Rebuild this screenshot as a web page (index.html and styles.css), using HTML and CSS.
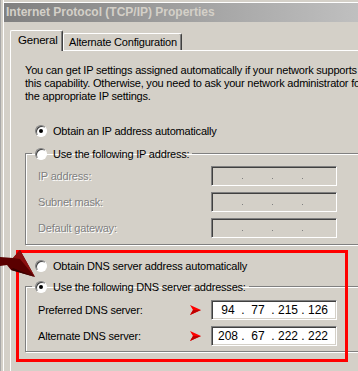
FILE: index.html
```html
<!DOCTYPE html>
<html>
<head>
    <title>Internet Protocol (TCP/IP) Properties</title>
    <link rel="stylesheet" href="styles.css">
</head>
<body>
<div class="desk">
    <div class="strip"></div>
    <div class="dialog">
        <div class="titlebar">Internet Protocol (TCP/IP) Properties</div>

        <div class="tabs">
            <div class="tab active">General</div>
            <div class="tab">Alternate Configuration</div>
        </div>

        <div class="panel">
            <p class="intro">You can get IP settings assigned automatically if your network supports<br>
                this capability. Otherwise, you need to ask your network administrator for<br>
                the appropriate IP settings.</p>

            <div class="option first">
                <span class="radio checked"></span>
                <span>Obtain an IP address automatically</span>
            </div>

            <fieldset class="group ip-group">
                <legend>
                    <span class="radio"></span>
                    <span>Use the following IP address:</span>
                </legend>
                <div class="field">
                    <span class="label disabled">IP address:</span>
                    <div class="ipbox off">
                        <span class="seg"></span><span class="dot">.</span>
                        <span class="seg"></span><span class="dot">.</span>
                        <span class="seg"></span><span class="dot">.</span>
                        <span class="seg"></span>
                    </div>
                </div>
                <div class="field">
                    <span class="label disabled">Subnet mask:</span>
                    <div class="ipbox off">
                        <span class="seg"></span><span class="dot">.</span>
                        <span class="seg"></span><span class="dot">.</span>
                        <span class="seg"></span><span class="dot">.</span>
                        <span class="seg"></span>
                    </div>
                </div>
                <div class="field">
                    <span class="label disabled">Default gateway:</span>
                    <div class="ipbox off">
                        <span class="seg"></span><span class="dot">.</span>
                        <span class="seg"></span><span class="dot">.</span>
                        <span class="seg"></span><span class="dot">.</span>
                        <span class="seg"></span>
                    </div>
                </div>
            </fieldset>

            <div class="option dns-auto">
                <span class="radio"></span>
                <span>Obtain DNS server address automatically</span>
            </div>

            <fieldset class="group dns-group">
                <legend>
                    <span class="radio checked"></span>
                    <span>Use the following DNS server addresses:</span>
                </legend>
                <div class="field">
                    <span class="label">Preferred DNS server:</span>
                    <svg class="pointer" width="11" height="10" viewBox="0 0 11 10">
                        <polygon points="0,0 11,5 0,10 3,5" fill="#ff0000"/>
                        <polygon points="0,10 11,5 3,5" fill="#c00000"/>
                    </svg>
                    <div class="ipbox">
                        <span class="seg">94</span><span class="dot">.</span>
                        <span class="seg">77</span><span class="dot">.</span>
                        <span class="seg">215</span><span class="dot">.</span>
                        <span class="seg">126</span>
                    </div>
                </div>
                <div class="field">
                    <span class="label">Alternate DNS server:</span>
                    <svg class="pointer" width="11" height="10" viewBox="0 0 11 10">
                        <polygon points="0,0 11,5 0,10 3,5" fill="#ff0000"/>
                        <polygon points="0,10 11,5 3,5" fill="#c00000"/>
                    </svg>
                    <div class="ipbox">
                        <span class="seg">208</span><span class="dot">.</span>
                        <span class="seg">67</span><span class="dot">.</span>
                        <span class="seg">222</span><span class="dot">.</span>
                        <span class="seg">222</span>
                    </div>
                </div>
            </fieldset>
        </div>
    </div>
</div>

<!-- annotations drawn over the screenshot -->
<div class="highlight"></div>
<svg class="big-arrow" width="40" height="45" viewBox="0 240 40 45">
    <polygon points="0,257 13,258 20,250 35,277 11,270 7,265 0,266" fill="#5a0000"/>
    <polygon points="13,258 20,250 35,277 20,259" fill="#8a1010"/>
    <polygon points="35,277 11,270 13,268" fill="#3a0000"/>
</svg>
</body>
</html>
```

FILE: styles.css
```css
body {
    margin: 0;
    width: 358px;
    height: 371px;
    overflow: hidden;
    position: relative;
    background-color: #d4d0c8;
    font-family: "Liberation Sans", Arial, sans-serif;
    font-size: 11px;
    letter-spacing: -0.2px;
    color: #000;
}

.desk {
    display: flex;
    height: 371px;
}

.strip {
    flex: none;
    width: 4px;
    box-sizing: border-box;
    background-color: #d4d0c8;
    border-left: 1px solid #a8a8a8;
    border-right: 1px solid #fff;
}

.dialog {
    width: 420px;
    flex: none;
    padding-top: 2px;
}

.titlebar {
    border-top: 1px solid #fff;
    height: 19px;
    line-height: 19px;
    padding-left: 2px;
    font-weight: bold;
    font-size: 12px;
    letter-spacing: 0;
    color: #d4d0c8;
    background: linear-gradient(to right, #808080, #c0c0c0 85%);
    white-space: nowrap;
}

.tabs {
    display: flex;
    align-items: flex-end;
    height: 20px;
    margin-top: 8px;
    padding-left: 6px;
}

.tab {
    height: 17px;
    line-height: 16px;
    padding: 0 4px 0 5px;
    border-top: 1px solid #fff;
    border-left: 1px solid #fff;
    border-right: 1px solid #404040;
    box-shadow: inset -1px 0 #808080;
    border-radius: 2px 2px 0 0;
    box-sizing: border-box;
    white-space: nowrap;
}

.tab.active {
    height: 21px;
    width: 53px;
    padding-left: 7px;
    line-height: 19px;
    margin-bottom: -1px;
    position: relative;
    background-color: #d4d0c8;
    font-size: 11.5px;
}

.panel {
    margin-left: 6px;
    border-top: 1px solid #fff;
    border-left: 1px solid #fff;
    height: 330px;
}

.intro {
    margin: 13px 0 0 14px;
    line-height: 13px;
    white-space: nowrap;
}

.option {
    display: flex;
    align-items: center;
    gap: 6px;
    height: 13px;
    padding-left: 24px;
    white-space: nowrap;
}

.option.first {
    margin-top: 21px;
}

.option.dns-auto {
    margin-top: 14px;
}

.radio {
    width: 12px;
    height: 12px;
    flex: none;
    box-sizing: border-box;
    border-radius: 50%;
    background-color: #fff;
    border: 1px solid;
    border-color: #808080 #fff #fff #808080;
    box-shadow: inset 1px 1px #404040;
    position: relative;
}

.radio.checked::after {
    content: "";
    position: absolute;
    left: 3px;
    top: 3px;
    width: 4px;
    height: 4px;
    border-radius: 50%;
    background-color: #000;
}

.group {
    margin: 10px 0 0 14px;
    padding: 6px 0;
    width: 360px;
    border: 1px solid #808080;
    box-shadow: inset 1px 1px #fff, 1px 1px #fff;
}

.dns-group {
    margin-top: 8px;
    padding-top: 7px;
    padding-bottom: 5px;
}

.group legend {
    display: flex;
    align-items: center;
    gap: 6px;
    height: 13px;
    margin-left: 6px;
    padding: 0 3px;
    white-space: nowrap;
}

.field {
    display: flex;
    align-items: center;
    height: 20px;
    width: 299px;
    padding-left: 12px;
    margin-bottom: 6px;
}

.field:last-child {
    margin-bottom: 0;
}

.label {
    flex: 1;
    white-space: nowrap;
}

.label.disabled {
    color: #808080;
    text-shadow: 1px 1px #fff;
}

.pointer {
    flex: none;
    margin-right: 10px;
}

.ipbox {
    display: flex;
    width: 126px;
    height: 20px;
    box-sizing: border-box;
    padding-left: 2px;
    align-items: center;
    background-color: #fff;
    border: 1px solid;
    border-color: #808080 #fff #fff #808080;
    box-shadow: inset 1px 1px #404040, inset -1px -1px #d4d0c8;
    font-size: 12px;
    letter-spacing: 0;
}

.ipbox.off {
    background-color: #d4d0c8;
    color: #808080;
}

.seg {
    width: 28px;
    text-align: center;
}

.dot {
    width: 2px;
    display: flex;
    justify-content: center;
}

.ipbox.off .dot {
    font-size: 0;
    align-self: stretch;
    position: relative;
}

.ipbox.off .dot::after {
    content: "";
    position: absolute;
    top: 11px;
    left: 0;
    width: 1px;
    height: 1px;
    background-color: #808080;
}

.highlight {
    position: absolute;
    left: 16px;
    top: 250px;
    width: 332px;
    height: 112px;
    box-sizing: border-box;
    border: 3px solid #ff0000;
}

.big-arrow {
    position: absolute;
    left: 0;
    top: 240px;
}
```
